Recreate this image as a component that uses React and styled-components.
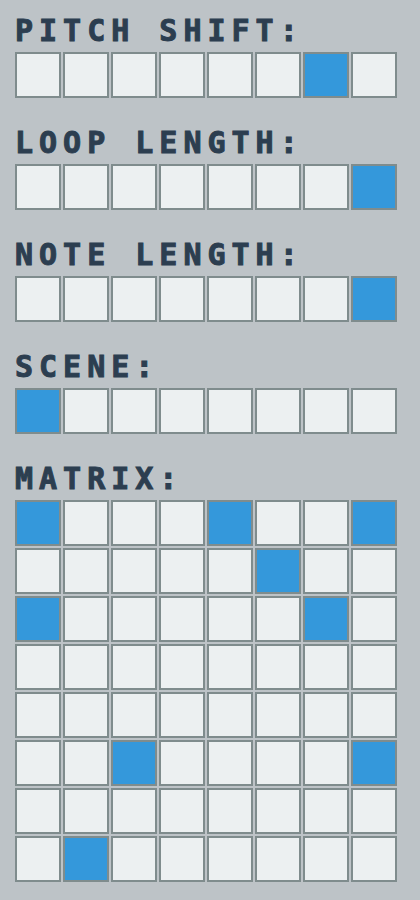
import React from "react";
import styled, { createGlobalStyle } from "styled-components";

const Global = createGlobalStyle`
  html, body { margin: 0; padding: 0; background: #bdc3c7; }
  body { font-family: "DejaVu Sans Mono", "Liberation Mono", monospace; }
`;

const Page = styled.div`
  display: flex;
  flex-direction: column;
  gap: 30px;
  padding: 16px 0 18px 15px;
  background: #bdc3c7;
  min-height: 900px;
  box-sizing: border-box;
`;

const Section = styled.section`
  display: flex;
  flex-direction: column;
  gap: 6px;
`;

const Label = styled.h2`
  margin: 0;
  height: 30px;
  font-family: "DejaVu Sans Mono", "Liberation Mono", monospace;
  font-weight: bold;
  font-size: 30px;
  line-height: 30px;
  letter-spacing: 6px;
  color: #2c3e50;
  -webkit-text-stroke: 1px #2c3e50;
  white-space: nowrap;
`;

const Grid = styled.div`
  display: grid;
  grid-template-columns: repeat(8, 46px);
  grid-auto-rows: 46px;
  gap: 2px;
`;

const Cell = styled.div`
  box-sizing: border-box;
  width: 46px;
  height: 46px;
  border: 2px solid #7f8c8d;
  background: ${(p) => (p.$on ? "#3498db" : "#ecf0f1")};
`;

const rows = [
  { label: "PITCH SHIFT:", on: [6] },
  { label: "LOOP LENGTH:", on: [7] },
  { label: "NOTE LENGTH:", on: [7] },
  { label: "SCENE:", on: [0] },
];

const matrix = [[0, 4, 7], [5], [0, 6], [], [], [2, 7], [], [1]];

function Row({ on }) {
  return Array.from({ length: 8 }, (_, i) => <Cell key={i} $on={on.includes(i)} />);
}

export default function App() {
  return (
    <>
      <Global />
      <Page>
        {rows.map((r) => (
          <Section key={r.label}>
            <Label>{r.label}</Label>
            <Grid>
              <Row on={r.on} />
            </Grid>
          </Section>
        ))}
        <Section>
          <Label>MATRIX:</Label>
          <Grid>
            {matrix.map((on, ri) => (
              <Row key={ri} on={on} />
            ))}
          </Grid>
        </Section>
      </Page>
    </>
  );
}
